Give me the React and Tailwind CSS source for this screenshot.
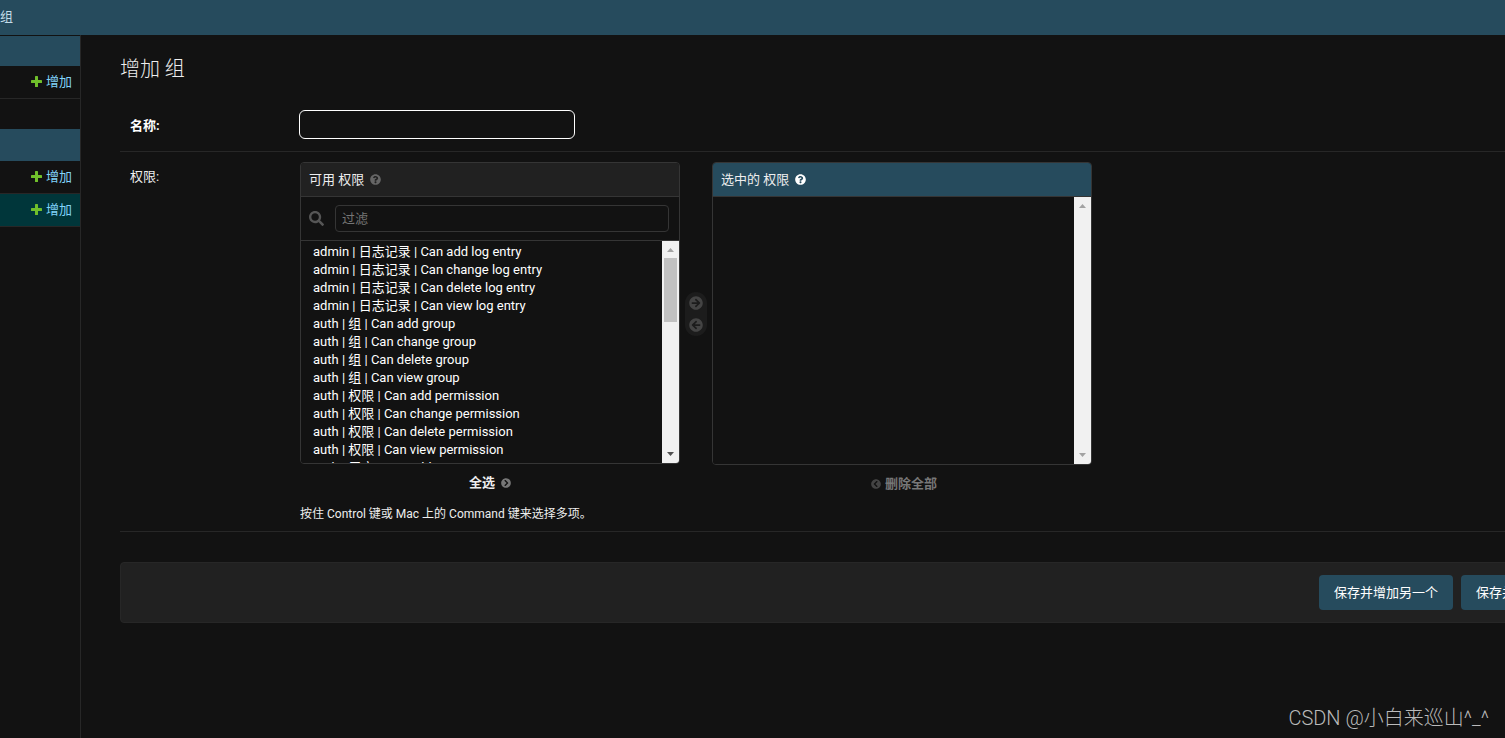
import React, { useState } from 'react'
import {
  FaQuestionCircle,
  FaSearch,
  FaArrowCircleRight,
  FaArrowCircleLeft,
  FaChevronCircleRight,
  FaChevronCircleLeft
} from 'react-icons/fa'

const permissions = [
  'admin | 日志记录 | Can add log entry',
  'admin | 日志记录 | Can change log entry',
  'admin | 日志记录 | Can delete log entry',
  'admin | 日志记录 | Can view log entry',
  'auth | 组 | Can add group',
  'auth | 组 | Can change group',
  'auth | 组 | Can delete group',
  'auth | 组 | Can view group',
  'auth | 权限 | Can add permission',
  'auth | 权限 | Can change permission',
  'auth | 权限 | Can delete permission',
  'auth | 权限 | Can view permission',
  'auth | 用户 | Can add user'
]

const PlusIcon = () => (
  <svg viewBox="0 0 11 11" className="h-[11px] w-[11px]" fill="#70bf2b" aria-hidden="true">
    <rect x="4" y="0" width="3" height="11" rx="0.6" />
    <rect x="0" y="4" width="11" height="3" rx="0.6" />
  </svg>
)

const AddLink = ({ selected = false }) => (
  <div
    className={`flex h-[33px] items-center justify-end border-b border-[#272727] pr-2 pb-px ${
      selected ? 'bg-[#00363a]' : ''
    }`}
  >
    <a href="#add" className="flex items-center gap-1 text-[#81d4fa]">
      <PlusIcon />
      增加
    </a>
  </div>
)

const Sidebar = () => (
  <nav className="w-[81px] shrink-0 border-r border-[#272727] pt-px">
    <div className="h-[30px] bg-[#264b5d]" />
    <AddLink />
    <div className="mt-[30px] h-8 bg-[#264b5d]" />
    <AddLink />
    <AddLink selected />
  </nav>
)

const ScrollTrack = ({ active = false }) => (
  <div className="flex w-[17px] shrink-0 flex-col items-center bg-[#f1f1f1]" aria-hidden="true">
    <svg viewBox="0 0 17 17" className="h-[17px] w-[17px]">
      <path d="M5 11h7L8.500 7z" fill="#a3a3a3" />
    </svg>
    <div className="w-[13px] flex-1">{active && <div className="h-16 bg-[#c1c1c1]" />}</div>
    <svg viewBox="0 0 17 17" className="h-[17px] w-[17px]">
      <path d="M5 6h7L8.500 10z" fill={active ? '#505050' : '#a3a3a3'} />
    </svg>
  </div>
)

const AvailableBox = ({ filter, onFilter }) => (
  <div className="w-[380px]">
    <div className="flex h-[302px] flex-col overflow-hidden rounded border border-[#353535]">
      <h2 className="flex h-[34px] shrink-0 items-center gap-1.5 border-b border-[#353535] bg-[#212121] px-2">
        <label htmlFor="available">可用 权限</label>
        <FaQuestionCircle className="h-[11px] w-[11px] text-[#666]" />
      </h2>
      <div className="flex h-11 shrink-0 items-center gap-[11px] border-b border-[#353535] pr-2.5 pl-2">
        <label htmlFor="filter" aria-label="过滤">
          <FaSearch className="h-[15px] w-[15px] text-[#555]" />
        </label>
        <input
          id="filter"
          type="text"
          placeholder="过滤"
          value={filter}
          onChange={(e) => onFilter(e.target.value)}
          className="h-[27px] min-w-0 flex-1 rounded border border-[#353535] px-1.5 text-[13px] placeholder:text-[#757575] focus:outline-none"
        />
      </div>
      <div className="flex min-h-0 flex-1">
        <select
          id="available"
          multiple
          className="min-w-0 flex-1 overflow-y-scroll bg-[#121212] text-white [scrollbar-width:none] focus:outline-none"
        >
          {permissions
            .filter((name) => name.includes(filter))
            .map((name) => (
              <option key={name} className="h-[18px] min-h-0 px-3 py-0">
                {name}
              </option>
            ))}
        </select>
        <ScrollTrack active />
      </div>
    </div>
    <div className="mt-2.5 flex justify-center">
      <a href="#all" className="flex items-center gap-1.5 font-bold">
        全选
        <FaChevronCircleRight className="h-2.5 w-2.5 text-[#777]" />
      </a>
    </div>
  </div>
)

const ChosenBox = () => (
  <div className="w-[380px]">
    <div className="flex h-[303px] flex-col overflow-hidden rounded border border-[#353535]">
      <h2 className="flex h-[34px] shrink-0 items-center gap-1.5 border-b border-[#353535] bg-[#264b5d] px-2">
        <label htmlFor="chosen">选中的 权限</label>
        <FaQuestionCircle className="h-[11px] w-[11px] text-white" />
      </h2>
      <div className="flex min-h-0 flex-1">
        <select
          id="chosen"
          multiple
          className="min-w-0 flex-1 bg-[#121212] [scrollbar-width:none] focus:outline-none"
        />
        <ScrollTrack />
      </div>
    </div>
    <div className="mt-2.5 flex justify-center pl-1">
      <a href="#none" className="flex items-center gap-1 font-bold text-[#777]">
        <FaChevronCircleLeft className="h-2.5 w-2.5 text-[#444]" />
        删除全部
      </a>
    </div>
  </div>
)

const Chooser = () => (
  <div className="mx-[5px] mt-[130px] flex h-11 w-[22px] flex-col items-center justify-center gap-2 rounded-full bg-[#1c1c1c] text-[#444]">
    <button type="button" aria-label="选择">
      <FaArrowCircleRight className="h-3.5 w-3.5" />
    </button>
    <button type="button" aria-label="删除">
      <FaArrowCircleLeft className="h-3.5 w-3.5" />
    </button>
  </div>
)

const App = () => {
  const [name, setName] = useState('')
  const [filter, setFilter] = useState('')

  return (
    <div className="relative flex min-h-screen flex-col overflow-hidden bg-[#121212] font-['Roboto','Noto_Sans_CJK_SC',sans-serif] text-[13px] leading-[18px] text-[#eee]">
      <header className="flex h-[35px] items-center bg-[#264b5d] pb-0.5 text-[#c4dce8]">组</header>

      <div className="flex flex-1">
        <Sidebar />

        <main className="min-w-0 flex-1 overflow-hidden pt-5 pl-[39px]">
          <h1 className="text-xl leading-7 font-light">增加 组</h1>

          <form className="mt-[17px]" onSubmit={(e) => e.preventDefault()}>
            <div className="flex border-b border-[#272727] px-2.5 pt-2.5 pb-3">
              <label htmlFor="name" className="w-[169px] pt-[7px] font-bold text-white">
                名称:
              </label>
              <input
                id="name"
                type="text"
                value={name}
                onChange={(e) => setName(e.target.value)}
                className="h-[29px] w-[276px] rounded-md border border-white px-1.5 focus:outline-none"
              />
            </div>

            <div className="flex border-b border-[#272727] py-2.5 pl-2.5">
              <label htmlFor="available" className="w-[170px] shrink-0 pt-1.5">
                权限:
              </label>
              <div>
                <div className="flex items-start">
                  <AvailableBox filter={filter} onFilter={setFilter} />
                  <Chooser />
                  <ChosenBox />
                </div>
                <p className="mt-3.5 text-xs leading-[14px]">按住 Control 键或 Mac 上的 Command 键来选择多项。</p>
              </div>
            </div>

            {/* Submit row runs past the right edge of the window */}
            <div className="mt-[30px] -mr-[90px] flex justify-end gap-2 rounded border border-[#272727] bg-[#212121] p-3 text-white">
              <button type="submit" className="h-[35px] rounded bg-[#264b5d] px-[15px]">
                保存并增加另一个
              </button>
              <button type="submit" className="h-[35px] rounded bg-[#264b5d] px-[15px]">
                保存并继续编辑
              </button>
            </div>
          </form>
        </main>
      </div>

      <div className="absolute right-4 bottom-2 text-xl leading-6 font-light text-[#bbb]">CSDN @小白来巡山^_^</div>
    </div>
  )
}

export default App
